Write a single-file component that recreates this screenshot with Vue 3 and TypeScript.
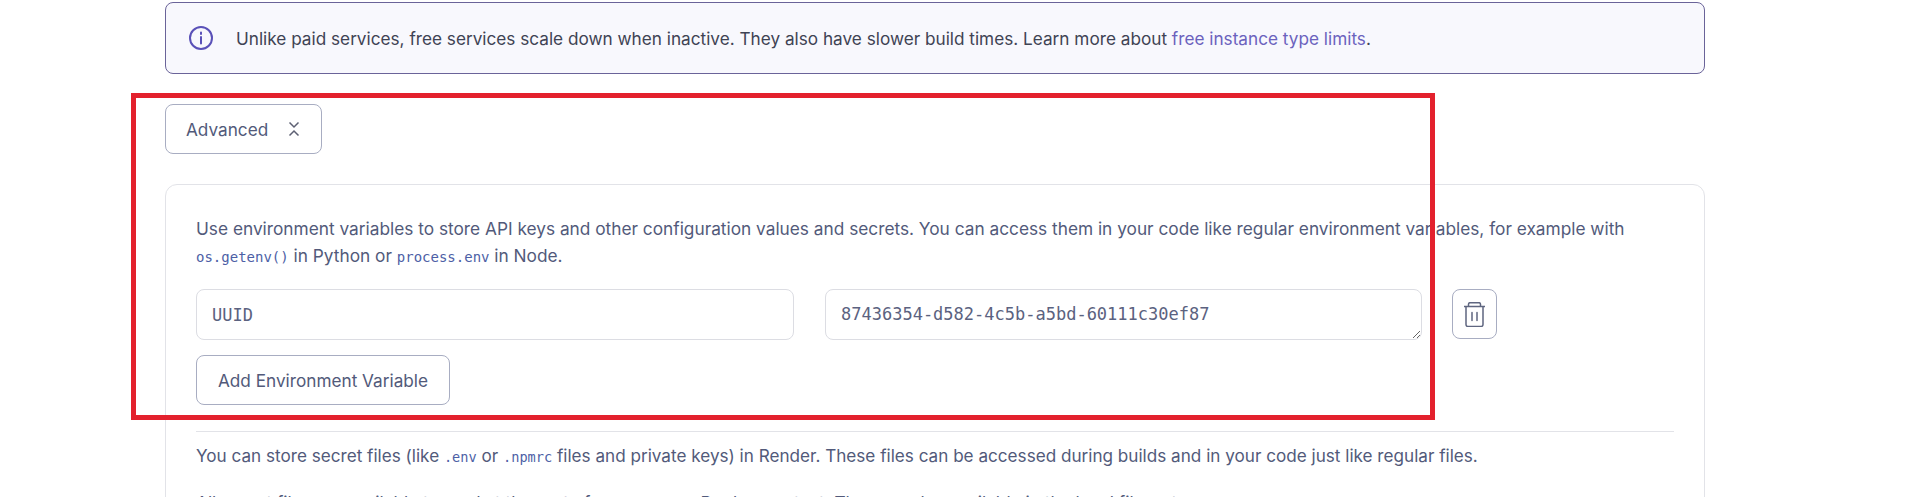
<script setup lang="ts">
const envKey = "UUID";
const envValue = "87436354-d582-4c5b-a5bd-60111c30ef87";
</script>

<template>
  <main class="page">
    <div class="alert">
      <svg class="info" viewBox="0 0 24 24" fill="none" aria-hidden="true">
        <circle cx="12" cy="12" r="11" />
        <path d="M12 11v6.5M12 6.6v1.4" />
      </svg>
      <p>
        Unlike paid services, free services scale down when inactive. They also have slower build times. Learn more about
        <a href="#">free instance type limits</a>.
      </p>
    </div>

    <button class="btn advanced" type="button">
      Advanced
      <svg class="chev" viewBox="0 0 12 16" fill="none" aria-hidden="true">
        <path d="M1.5 1.5 6 6l4.500-4.500M1.500 14.500 6 10l4.500 4.500" />
      </svg>
    </button>

    <section class="card">
      <p class="copy">
        Use environment variables to store API keys and other configuration values and secrets. You can access them in your code like regular environment variables, for example with
        <code>os.getenv()</code> in Python or <code>process.env</code> in Node.
      </p>

      <div class="env-row">
        <input class="field key" type="text" :value="envKey" readonly />
        <textarea class="field value" :value="envValue" rows="1" readonly></textarea>
        <button class="btn trash" type="button" aria-label="Delete">
          <svg viewBox="0 0 21 25" fill="none" aria-hidden="true">
            <path d="M0 4.500h21M4.500 4.500V2.200Q4.500.7 6 .7h9q1.500 0 1.500 1.500v2.300M2 4.500v18q0 2 2 2h13q2 0 2-2v-18M8 10.500v8M13 10.500v8" />
          </svg>
        </button>
      </div>

      <button class="btn add" type="button">Add Environment Variable</button>

      <hr />

      <p class="copy files">
        You can store secret files (like <code>.env</code> or <code>.npmrc</code> files and private keys) in Render. These files can be accessed during builds and in your code just like regular files.
      </p>
      <p class="copy more">
        All secret files are available to read at the root of your repo or Docker context. They are also available in the local filesystem.
      </p>
    </section>

    <div class="callout" aria-hidden="true"></div>
  </main>
</template>

<style>
html, body { margin: 0; height: 497px; overflow: hidden; background: #fff; }
</style>

<style scoped>
.page {
  position: relative;
  box-sizing: border-box;
  height: 497px;
  overflow: hidden;
  padding: 2px 202px 0 165px;
  font-family: Inter, "Liberation Sans", sans-serif;
  font-size: 17.2px;
  color: #525a7a;
}
p { margin: 0; }
.alert {
  box-sizing: border-box;
  height: 72px;
  display: flex;
  align-items: center;
  gap: 23px;
  padding: 0 23px;
  border: 1px solid #6a6399;
  border-radius: 8px;
  background: #f8f8fd;
  color: #3f4354;
}
.alert a { color: #6b62bd; text-decoration: none; }
.info { width: 24px; height: 24px; flex: none; }
.info circle, .info path { stroke: #5a51b8; stroke-width: 2; stroke-linecap: round; }
.btn {
  display: flex;
  align-items: center;
  box-sizing: border-box;
  border: 1px solid #a8adc2;
  border-radius: 8px;
  background: #fff;
  color: #525a7a;
  font: inherit;
  padding: 0;
}
.advanced {
  width: 157px;
  height: 50px;
  margin-top: 30px;
  padding-left: 20px;
  gap: 20px;
}
.chev { width: 12px; height: 16px; }
.chev path { stroke: #5d6073; stroke-width: 1.5; }
.card {
  box-sizing: border-box;
  height: 400px;
  margin-top: 30px;
  padding: 30px 30px 0;
  border: 1px solid #e2e3e8;
  border-radius: 12px;
}
.copy { font-size: 17.27px; line-height: 27px; }
code {
  font-family: "DejaVu Sans Mono", monospace;
  font-size: 14px;
  line-height: 1;
  color: #4d5fa6;
}
.env-row {
  display: flex;
  align-items: flex-start;
  margin-top: 20px;
}
.field {
  display: block;
  box-sizing: border-box;
  height: 51px;
  margin: 0;
  padding: 14px 15px;
  border: 1px solid #dcdde3;
  border-radius: 8px;
  outline: none;
  background: #fff;
  font-family: "DejaVu Sans Mono", monospace;
  font-size: 17px;
  line-height: 20px;
  color: #5b6280;
}
.key { width: 598px; }
.value { width: 597px; margin-left: 31px; resize: vertical; overflow: hidden; }
.trash {
  justify-content: center;
  width: 45px;
  height: 50px;
  margin-left: 30px;
}
.trash svg { width: 21px; height: 25px; }
.trash path { stroke: #5f6680; stroke-width: 1.5; stroke-linecap: round; }
.add {
  width: 254px;
  height: 50px;
  margin-top: 15px;
  justify-content: center;
}
hr {
  height: 1px;
  margin: 26px 0 0;
  border: 0;
  background: #e2e3e8;
}
.files { margin-top: 10px; font-size: 17.14px; }
.files code { font-size: 13.6px; }
.more { margin-top: 20px; }
.callout {
  position: absolute;
  left: 131px;
  top: 93px;
  width: 1304px;
  height: 327px;
  box-sizing: border-box;
  border: 5px solid #e3212d;
  pointer-events: none;
}
</style>
